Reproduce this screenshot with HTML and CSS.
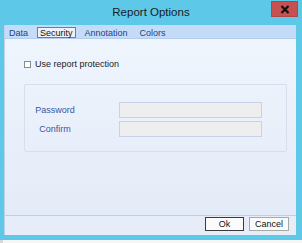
FILE: index.html
```html
<!DOCTYPE html>
<html lang="en">
<head>
    <meta charset="UTF-8">
    <title>Report Options</title>
    <link rel="stylesheet" href="styles.css">
</head>
<body>
    <div class="window">
        <div class="titlebar">
            <span></span>
            <span class="title">Report Options</span>
            <span class="close">
                <svg width="10" height="9" viewBox="0 0 10 9">
                    <path d="M1.5 1 L8.5 8 M8.5 1 L1.5 8" stroke="#111" stroke-width="2.2"/>
                </svg>
            </span>
        </div>
        <div class="client">
            <div class="tabs">
                <span class="tab">Data</span>
                <span class="tab selected">Security</span>
                <span class="tab">Annotation</span>
                <span class="tab">Colors</span>
            </div>
            <div class="page">
                <label class="check-row">
                    <span class="checkbox"></span>
                    <span>Use report protection</span>
                </label>
                <div class="group">
                    <div class="field">
                        <span class="field-label">Password</span>
                        <span class="input-element"></span>
                    </div>
                    <div class="field">
                        <span class="field-label">Confirm</span>
                        <span class="input-element"></span>
                    </div>
                </div>
            </div>
            <div class="buttons">
                <span class="btn default">Ok</span>
                <span class="btn">Cancel</span>
            </div>
        </div>
        <div class="frame-bottom"></div>
    </div>
    <div class="desktop"></div>
</body>
</html>
```

FILE: styles.css
```css
html, body {
    margin: 0;
    padding: 0;
    width: 302px;
    height: 243px;
    overflow: hidden;
}
body {
    background-color: #ffffff;
    font-family: "Liberation Sans", Arial, sans-serif;
    font-size: 9px;
    color: #1a1a1a;
}
.window {
    width: 302px;
    height: 240px;
    background-color: #5ec8e9;
    display: flex;
    flex-direction: column;
}
.titlebar {
    height: 25px;
    display: grid;
    grid-template-columns: 1fr auto 1fr;
    align-items: start;
}
.title {
    font-size: 11.5px;
    line-height: 25px;
    color: #1b1b1b;
}
.close {
    justify-self: end;
    width: 27px;
    height: 16px;
    margin: 1px 4px 0 0;
    box-sizing: border-box;
    background-color: #c75050;
    border: 1px solid #b04646;
    display: flex;
    justify-content: center;
    align-items: center;
}
.client {
    margin: 0 6px 0 4px;
    height: 210px;
    display: flex;
    flex-direction: column;
    border-left: 1px solid #c2d0ea;
}
.tabs {
    height: 13px;
    padding: 2px 0 0 1px;
    box-sizing: border-box;
    display: flex;
    gap: 6px;
    background-color: #c4dcf8;
    border-bottom: 1px solid #b4cced;
    height: 14px;
}
.tab {
    height: 11px;
    line-height: 10px;
    padding: 0 2px;
    border: 1px solid transparent;
    box-sizing: border-box;
    color: #22428a;
}
.tab.selected {
    border-color: #7c7c7c;
    background-color: #eef2f8;
    color: #111111;
}
.page {
    flex: 1;
    background: linear-gradient(#eff5fd, #e4ebf8);
    border-bottom: 1px solid #c2cfe8;
    padding: 20px 9px 0 19px;
}
.check-row {
    display: flex;
    align-items: center;
    gap: 4px;
    height: 10px;
    color: #222222;
}
.checkbox {
    width: 7px;
    height: 7px;
    border: 1px solid #8c8c8c;
    background-color: #ffffff;
    box-sizing: border-box;
}
.group {
    margin-top: 15px;
    height: 68px;
    border: 1px solid #d6dfee;
    border-radius: 2px;
    padding: 17px 0 0 0;
    box-sizing: border-box;
    display: flex;
    flex-direction: column;
    gap: 3px;
}
.field {
    display: flex;
    align-items: center;
}
.field-label {
    width: 60px;
    text-align: center;
    color: #3556a8;
    margin-right: 34px;
}
.input-element {
    width: 143px;
    height: 16px;
    box-sizing: border-box;
    border: 1.5px solid #c6d2e6;
    background-color: #eeeeee;
}
.buttons {
    height: 19px;
    background-color: #e6ecf8;
    display: flex;
    justify-content: flex-end;
    align-items: flex-start;
    gap: 5px;
    padding: 1px 7px 0 0;
    box-sizing: border-box;
}
.btn {
    width: 40px;
    height: 14px;
    box-sizing: border-box;
    border: 1px solid #a8a8a8;
    background-color: #fbfbfb;
    text-align: center;
    line-height: 12px;
    color: #111111;
}
.btn.default {
    width: 39px;
    border-color: #3a3a3a;
}
.frame-bottom {
    flex: 1;
}
.desktop {
    height: 3px;
    background-color: #f6f6f6;
    border-left: 3px solid #d8d8d8;
}
```
